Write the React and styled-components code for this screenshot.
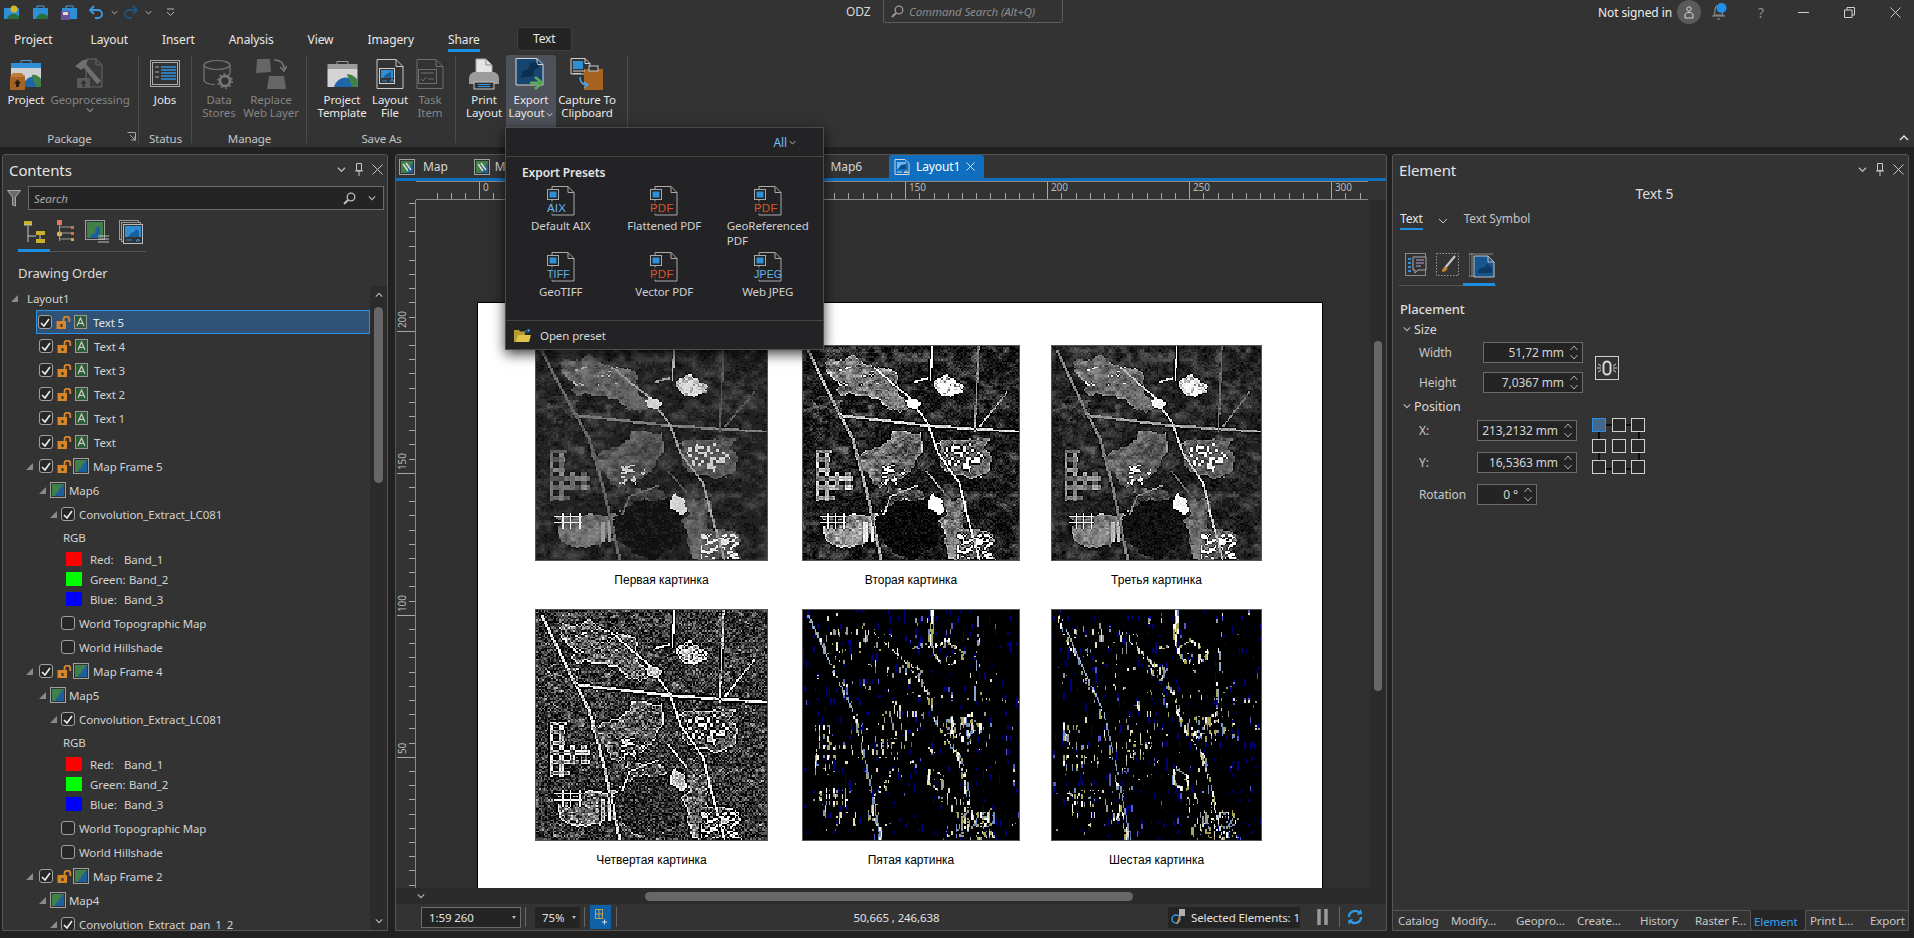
import React, { useMemo } from "react";
import styled, { createGlobalStyle } from "styled-components";

const FONT = `"Noto Sans", "Open Sans", "Liberation Sans", sans-serif`;

const Global = createGlobalStyle`
  html, body { margin: 0; padding: 0; background: #212121; overflow: hidden; }
  * { box-sizing: border-box; }
  body { font-family: ${FONT}; font-size: 12px; color: #dcdcdc; letter-spacing: -0.1px; }
`;

/* ---------- procedural satellite picture ---------- */
function hash(a, b) {
  const s = Math.sin(a * 127.1 + b * 311.7) * 43758.5453;
  return s - Math.floor(s);
}
function vnoise(x, y) {
  const xi = Math.floor(x), yi = Math.floor(y), fx = x - xi, fy = y - yi;
  const u = fx * fx * (3 - 2 * fx), v = fy * fy * (3 - 2 * fy);
  const a = hash(xi, yi), b = hash(xi + 1, yi), c = hash(xi, yi + 1), d = hash(xi + 1, yi + 1);
  return a + (b - a) * u + (c - a) * v + (a - b - c + d) * u * v;
}
function inPoly(px, py, pts) {
  let r = false;
  for (let i = 0, j = pts.length - 1; i < pts.length; j = i++) {
    const [xi, yi] = pts[i], [xj, yj] = pts[j];
    if (yi > py !== yj > py && px < ((xj - xi) * (py - yi)) / (yj - yi) + xi) r = !r;
  }
  return r;
}
function distLine(px, py, pts) {
  let best = 1e9;
  for (let i = 0; i < pts.length - 1; i++) {
    const [ax, ay] = pts[i], [bx, by] = pts[i + 1];
    const dx = bx - ax, dy = by - ay;
    const t = Math.max(0, Math.min(1, ((px - ax) * dx + (py - ay) * dy) / (dx * dx + dy * dy)));
    best = Math.min(best, Math.hypot(px - ax - t * dx, py - ay - t * dy));
  }
  return best;
}
const PATCHES = [
  { p: [[55, 40], [130, 35], [195, 75], [205, 125], [235, 165], [215, 190], [160, 160], [80, 130], [60, 90]], l: 0.4 },
  { p: [[110, 305], [165, 275], [185, 235], [240, 240], [250, 300], [215, 365], [165, 395], [130, 350]], l: 0.36 },
  { p: [[37, 470], [110, 475], [165, 455], [150, 520], [130, 560], [80, 565], [50, 525]], l: 0.46 },
  { p: [[292, 425], [340, 440], [345, 510], [400, 530], [400, 598], [300, 598]], l: 0.38 },
  { p: [[30, 130], [75, 150], [80, 210], [45, 215]], l: 0.2 },
  { p: [[180, 400], [240, 390], [250, 425], [190, 435]], l: 0.3 },
];
const ROADS = [
  { p: [[12, 15], [65, 160], [105, 260], [135, 410], [165, 598]], l: 0.4, w: 3 },
  { p: [[85, 195], [260, 222], [455, 240]], l: 0.5, w: 3.5 },
  { p: [[150, 60], [220, 140], [262, 215], [285, 300], [330, 385], [345, 470], [372, 598]], l: 0.62, w: 2.2 },
  { p: [[272, 0], [268, 95]], l: 0.7, w: 2 },
  { p: [[370, 0], [362, 240]], l: 0.34, w: 2 },
  { p: [[430, 130], [372, 225]], l: 0.38, w: 2 },
  { p: [[260, 350], [310, 430]], l: 0.32, w: 2 },
  { p: [[235, 100], [262, 90]], l: 0.6, w: 2.5 },
  { p: [[170, 470], [185, 420], [240, 390]], l: 0.42, w: 2 },
];
function lum(u, v) {
  const wu = u + 24 * (vnoise(u / 26, v / 26) - 0.5) + 9 * (vnoise(u / 8, v / 8 + 7) - 0.5);
  const wv = v + 24 * (vnoise(u / 26 + 9, v / 26) - 0.5) + 9 * (vnoise(u / 8 + 5, v / 8) - 0.5);
  let g = 0.07 + 0.17 * vnoise(u / 28, v / 28) * vnoise(u / 13 + 3, v / 13) * 1.6 + 0.06 * vnoise(u / 6, v / 6);
  if (Math.hypot(wu - 222, (wv - 505) * 0.8) < 68) g = 0.06 + 0.06 * vnoise(u / 9, v / 9);
  for (const s of PATCHES)
    if (inPoly(wu, wv, s.p)) g = s.l + 0.22 * (vnoise(u / 12, v / 12) - 0.5) + 0.1 * (vnoise(u / 5, v / 5) - 0.5);
  const circ = Math.hypot(wu - 337, wv - 310);
  if (circ < 60) g = 0.36 + 0.16 * (vnoise(u / 8, v / 8) - 0.5);
  if (circ < 42 && hash(Math.floor(u / 6), Math.floor(v / 8)) > 0.72) g = 0.82;
  if (u > 27 && u < 107 && v > 290 && v < 435 && (u < 62 + 6 * Math.sin(v / 30) || (v > 352 && v < 402))) {
    const f = Math.floor(u / 11) % 2 === 0 || Math.floor(v / 13) % 2 === 0;
    g = f ? 0.3 + 0.28 * hash(Math.floor(u / 11), Math.floor(v / 13)) : 0.13;
  }
  if (u > 37 && u < 92 && v > 468 && v < 512) {
    if (Math.floor(u / 17) !== Math.floor((u - 3) / 17) || Math.floor(v / 17) !== Math.floor((v - 4) / 17)) g = 0.92;
  }
  if (u > 120 && u < 150 && v > 490 && v < 550 && Math.floor(u / 8) % 2 === 0) g = 0.62;
  if (u > 325 && u < 400 && v > 525 && v < 592 && hash(Math.floor(wu / 8), Math.floor(wv / 7)) > 0.7) g = 0.92;
  if (u > 165 && u < 215 && v > 330 && v < 395 && hash(Math.floor(wu / 7), Math.floor(wv / 7)) > 0.82) g = 0.8;
  if (u > 70 && u < 160 && v > 50 && v < 110 && hash(Math.floor(wu / 7), Math.floor(wv / 7)) > 0.86) g = 0.7;
  for (const r of ROADS) if (distLine(u, v, r.p) < r.w) g = r.l + 0.1 * (vnoise(u / 7, v / 7) - 0.5);
  if (Math.hypot((wu - 307) * 0.8, wv - 113) < 23) g = 0.9 - 0.3 * hash(Math.floor(u / 6), Math.floor(v / 6)) * (vnoise(u / 9, v / 9) > 0.6 ? 1 : 0);
  if (Math.hypot(wu - 232, wv - 160) < 12) g = 0.86;
  if (Math.hypot((wu - 277) * 1.6, (wv - 440) * 0.9) < 27) g = 0.86;
  return g + 0.05 * (hash(u, v) - 0.5);
}
const COLS = 150, ROWS = 146;
const LGRID = (() => {
  const out = new Float32Array(COLS * ROWS);
  for (let r = 0; r < ROWS; r++)
    for (let c = 0; c < COLS; c++) out[r * COLS + c] = lum(((c + 0.5) / COLS) * 455, ((r + 0.5) / ROWS) * 598);
  return out;
})();
const at = (c, r) => LGRID[Math.max(0, Math.min(ROWS - 1, r)) * COLS + Math.max(0, Math.min(COLS - 1, c))];
const clamp = (x) => Math.max(0, Math.min(1, x));
const gray = (g) => {
  const q = Math.round(clamp(g) * 15) * 17;
  const h = q.toString(16).padStart(2, "0");
  return `#${h}${h}${h}`;
};
function colorAt(kind, c, r) {
  const L = at(c, r);
  const e = L - (at(c - 1, r) + at(c + 1, r) + at(c, r - 1) + at(c, r + 1)) / 4;
  if (kind === 1) return gray(L * 0.95 + e * 0.3);
  if (kind === 2) return gray((L - 0.08) * 1.5 + e * 3);
  if (kind === 3) return gray((L - 0.03) * 1.15 + e * 1.2);
  if (kind === 4) {
    const n = hash(c * 3.1, r * 1.7);
    return gray(0.08 + L * 0.75 + e * 9 + (n - 0.5) * 0.38);
  }
  const seed = kind === 5 ? 1 : 9;
  const u = ((c + 0.5) / COLS) * 455, v = ((r + 0.5) / ROWS) * 598;
  const nv = kind === 5 ? 0 : -6;
  if (distLine(u + nv, v, ROADS[0].p) < 1.4 && vnoise(c, r / 9 + seed) > 0.2) return v < 300 ? "#9db6d6" : "#7f95b4";
  if (distLine(u, v, ROADS[3].p) < 1) return "#ffffff";
  if (distLine(u, v, ROADS[4].p) < 0.9 && vnoise(c, r / 6 + seed) > 0.35) return "#8fa6c8";
  if (distLine(u, v, ROADS[2].p) < 0.9 && vnoise(c, r / 4 + seed) > 0.45) return "#d8d8d8";
  const d = Math.abs(at(c + 1, r) - at(c - 1, r)) + Math.abs(at(c + 1, r + 1) - at(c - 1, r + 1)) * 0.5;
  const streak = vnoise(c * 1.9 + seed, r / 5 + seed);
  const pick = hash(c + seed, Math.floor(r / 4));
  const edgeHit = d * streak > 0.24;
  const texHit = L > 0.25 && pick > 0.86 && streak > 0.55;
  if (edgeHit || texHit) {
    if (pick < 0.25) return "#ffffff";
    if (pick < 0.55) return "#a8a858";
    if (pick < 0.8) return "#6f8fc4";
    return pick > 0.93 ? "#e0e0c0" : "#9a9a9a";
  }
  if (streak > 0.76 && pick > 0.62) return pick > 0.95 ? "#5858c0" : "#000078";
  return "#000000";
}
function buildPaths(kind) {
  const map = {};
  for (let r = 0; r < ROWS; r++) {
    let start = 0;
    let cur = colorAt(kind, 0, r);
    for (let c = 1; c <= COLS; c++) {
      const col = c < COLS ? colorAt(kind, c, r) : null;
      if (col !== cur) {
        map[cur] = (map[cur] || "") + `M${start} ${r}h${c - start}v1h-${c - start}z`;
        start = c;
        cur = col;
      }
    }
  }
  return map;
}
const Raster = ({ kind }) => {
  const paths = useMemo(() => buildPaths(kind), [kind]);
  return (
    <RasterSvg viewBox={`0 0 ${COLS} ${ROWS}`} preserveAspectRatio="none" shapeRendering="crispEdges">
      {Object.entries(paths).map(([c, d]) => (
        <path key={c} d={d} fill={c} />
      ))}
    </RasterSvg>
  );
};

/* ---------- layout ---------- */
const Window = styled.div`
  position: relative;
  width: 1914px;
  height: 938px;
  overflow: hidden;
  display: flex;
  flex-direction: column;
  background: #212121;
`;
const TitleBar = styled.div`
  height: 24px;
  background: #333;
  display: grid;
  grid-template-columns: 846px 217px 1fr;
  align-items: start;
`;
const Qat = styled.div`
  display: flex;
  align-items: center;
  height: 24px;
  padding-left: 3px;
`;
const QatSlot = styled.span`
  display: inline-flex;
  margin-left: ${(p) => p.$ml || 0}px;
`;
const TitleMid = styled.div`
  display: flex;
  align-items: flex-start;
`;
const ProjectName = styled.span`
  width: 37px;
  line-height: 24px;
  color: #d8d8d8;
  font-size: 12px;
`;
const CommandSearch = styled.div`
  width: 180px;
  height: 23px;
  border: 1px solid #5c5c5c;
  border-top: none;
  border-radius: 0 0 3px 3px;
  display: flex;
  align-items: center;
  gap: 5px;
  padding-left: 7px;
  color: #8d8d8d;
  font-style: italic;
  font-size: 11.5px;
`;
const TitleRight = styled.div`
  display: flex;
  align-items: center;
  height: 24px;
  padding-left: 535px;
  position: relative;
`;
const SignedIn = styled.span`
  color: #eee;
  font-size: 12px;
  width: 79px;
  white-space: nowrap;
`;
const Avatar = styled.span`
  width: 24px;
  height: 24px;
  border-radius: 50%;
  background: #5a5a5a;
  display: inline-flex;
  align-items: center;
  justify-content: center;
`;
const WinSlot = styled.span`
  display: inline-flex;
  margin-left: ${(p) => p.$ml}px;
  color: #8a8a8a;
  font-size: 14px;
`;
const TabRow = styled.div`
  height: 28px;
  background: #333;
  display: flex;
  align-items: flex-end;
  gap: 34px;
  padding-left: 14px;
`;
const RibbonTab = styled.div`
  height: ${(p) => (p.$ctx ? 24 : 28)}px;
  padding-top: ${(p) => (p.$ctx ? 0 : 5)}px;
  margin-right: ${(p) => p.$mr || 0}px;
  line-height: 22px;
  font-size: 12px;
  color: #e8e8e8;
  border-bottom: ${(p) => (p.$active ? "3px solid #1e8fe0" : "none")};
  ${(p) =>
    p.$ctx &&
    `width:55px;text-align:center;background:#242424;border:1px solid #3e3e3e;border-radius:3px;margin-left:3px;margin-bottom:1px;`}
`;
const Ribbon = styled.div`
  height: 95px;
  background: #333;
  display: flex;
  position: relative;
`;
const Group = styled.div`
  width: ${(p) => p.$w}px;
  position: relative;
  display: flex;
  flex-direction: column;
  &::after {
    content: "";
    position: absolute;
    right: 0;
    top: 4px;
    bottom: 4px;
    width: 1px;
    background: #4c4c4c;
  }
`;
const GroupBody = styled.div`
  display: flex;
  height: 75px;
  padding-left: ${(p) => p.$pl || 0}px;
`;
const GroupLabel = styled.div`
  text-align: center;
  font-size: 11.5px;
  color: #c4c4c4;
  line-height: 14px;
  margin-top: 5px;
  padding-right: ${(p) => p.$pr || 0}px;
`;
const Launcher = styled.span`
  position: absolute;
  right: 3px;
  bottom: 6px;
  display: inline-flex;
`;
const RibbonBtn = styled.div`
  width: ${(p) => p.$w}px;
  height: 72px;
  margin-top: 3px;
  padding-top: 3px;
  display: flex;
  flex-direction: column;
  align-items: center;
  border-radius: 3px 3px 0 0;
  background: ${(p) => (p.$on ? "#4d5159" : "transparent")};
  color: ${(p) => (p.$off ? "#858585" : "#e8e8e8")};
`;
const BtnIcon = styled.div`
  height: 32px;
  display: flex;
  align-items: center;
  justify-content: center;
`;
const BtnLabel = styled.div`
  margin-top: 3px;
  font-size: 11.5px;
  line-height: 13px;
  text-align: center;
  white-space: pre;
`;
const LabelCaret = styled.span`
  display: inline-block;
  margin-left: 2px;
  vertical-align: -1px;
`;
const Collapse = styled.span`
  position: absolute;
  right: 5px;
  bottom: 4px;
  display: inline-flex;
`;
const Workspace = styled.div`
  margin-top: 7px;
  height: 777px;
  display: flex;
  padding-left: 2px;
`;
const Panel = styled.section`
  width: ${(p) => p.$w}px;
  margin-left: ${(p) => p.$ml || 0}px;
  background: #333;
  border: 1px solid #565656;
  border-radius: 3px 3px 0 0;
  display: flex;
  flex-direction: column;
  overflow: hidden;
  position: relative;
`;
const PanelHead = styled.div`
  height: 31px;
  flex: none;
  display: flex;
  align-items: center;
  justify-content: space-between;
  padding: 0 4px 2px 6px;
  font-size: 15px;
  color: #e4e4e4;
`;
const HeadTools = styled.div`
  display: flex;
  align-items: center;
  gap: 8px;
`;
const SearchRow = styled.div`
  height: 24px;
  flex: none;
  display: flex;
  align-items: center;
  padding: 0 3px 0 4px;
  gap: 7px;
`;
const SearchBox = styled.div`
  flex: 1;
  height: 24px;
  background: #242424;
  border: 1px solid #6b6b6b;
  display: flex;
  align-items: center;
  justify-content: space-between;
  padding: 0 7px 0 5px;
  color: #a8a8a8;
  font-style: italic;
  font-size: 11.5px;
`;
const SearchTools = styled.span`
  display: flex;
  align-items: center;
  gap: 12px;
`;
const IconTabs = styled.div`
  margin: ${(p) => p.$mt}px 0 0 ${(p) => p.$ml}px;
  width: ${(p) => p.$w}px;
  height: ${(p) => p.$h}px;
  flex: none;
  display: flex;
  align-items: flex-start;
  gap: ${(p) => p.$gap}px;
  padding-left: ${(p) => p.$pl}px;
  position: relative;
  border-bottom: 1px solid #555;
`;
const IconTabMark = styled.span`
  position: absolute;
  left: ${(p) => p.$l}px;
  bottom: -1px;
  width: ${(p) => p.$w}px;
  height: 3px;
  background: #1e8fe0;
`;
const DrawHead = styled.div`
  height: 34px;
  flex: none;
  padding: 9px 0 0 15px;
  font-size: 13px;
  line-height: 24px;
  color: #dcdcdc;
`;
const TreeWrap = styled.div`
  flex: 1;
  min-height: 0;
  display: flex;
`;
const Tree = styled.div`
  flex: 1;
  overflow: hidden;
`;
const Row = styled.div`
  height: ${(p) => p.$h || 24}px;
  margin-bottom: ${(p) => p.$mb || 0}px;
  position: relative;
  display: flex;
  align-items: center;
  padding-left: ${(p) => p.$x - 3}px;
  font-size: 11.5px;
  color: #d2d2d2;
  white-space: pre;
`;
const SelectBox = styled.div`
  height: 24px;
  margin-left: 33px;
  width: 334px;
  display: flex;
  align-items: center;
  padding-left: 1px;
  font-size: 11.5px;
  background: #2f5276;
  border: 1px solid #2c8fe6;
  color: #e4e4e4;
`;
const Slot = styled.span`
  display: inline-flex;
  flex: none;
  width: ${(p) => p.$w}px;
  margin-left: ${(p) => p.$ml || 0}px;
`;
const Swatch = styled.span`
  width: 16px;
  height: 14px;
  flex: none;
  background: ${(p) => p.$c};
  margin-right: 8px;
`;
const BandName = styled.span`
  display: inline-block;
  width: ${(p) => p.$w}px;
`;
const CheckBox = styled.span`
  width: 14px;
  height: 14px;
  flex: none;
  border: 1px solid #a0a0a0;
  border-radius: 3px;
  background: #272727;
  display: inline-flex;
  align-items: center;
  justify-content: center;
`;
const VTrack = styled.div`
  width: ${(p) => p.$w}px;
  flex: none;
  background: #2b2b2b;
  position: relative;
`;
const VThumb = styled.div`
  position: absolute;
  left: ${(p) => p.$l}px;
  width: ${(p) => p.$w}px;
  top: ${(p) => p.$t}px;
  height: ${(p) => p.$h}px;
  background: #676767;
  border-radius: 5px;
`;
const TrackArrow = styled.span`
  position: absolute;
  left: 0;
  right: 0;
  display: flex;
  justify-content: center;
  ${(p) => (p.$down ? "bottom: 5px;" : "top: 5px;")}
`;

/* center */
const DocTabs = styled.div`
  height: 23px;
  flex: none;
  display: flex;
  align-items: center;
  padding-left: 3px;
  border-bottom: 3px solid #0f6ebd;
  box-sizing: content-box;
`;
const DocTab = styled.div`
  display: flex;
  align-items: center;
  gap: 4px;
  height: 23px;
  font-size: 12px;
  color: #d6d6d6;
  margin-left: ${(p) => p.$ml || 0}px;
  ${(p) => p.$on && `background:#0f6ebd;color:#fff;border-radius:3px 3px 0 0;padding:0 6px 0 5px;width:95px;gap:6px;`}
`;
const RulerTop = styled.div`
  height: 19px;
  flex: none;
  display: flex;
`;
const RulerCorner = styled.div`
  width: 20px;
`;
const CanvasRow = styled.div`
  flex: 1;
  min-height: 0;
  display: flex;
`;
const RulerLeft = styled.div`
  width: 20px;
  flex: none;
`;
const Canvas = styled.div`
  flex: 1;
  overflow: hidden;
  padding: 102px 0 0 61px;
  background: #2f2f2f;
`;
const SheetPage = styled.div`
  width: 846px;
  height: 600px;
  background: #fff;
  border: 1px solid #000;
  padding: 42px 0 0 57px;
  display: grid;
  grid-template-columns: 267px 249px 211px;
  grid-template-rows: 264px 260px;
  font-family: "Liberation Sans", Arial, sans-serif;
  letter-spacing: 0;
`;
const Figure = styled.figure`
  margin: 0;
  width: ${(p) => p.$w}px;
  display: flex;
  flex-direction: column;
`;
const Picture = styled.div`
  height: ${(p) => p.$h}px;
  border: 1px solid #555;
  overflow: hidden;
`;
const RasterSvg = styled.svg`
  display: block;
  width: 100%;
  height: 100%;
`;
const Caption = styled.figcaption`
  margin-top: 12px;
  padding-left: ${(p) => p.$pl || 0}px;
  font-size: 12px;
  line-height: 14px;
  color: #000;
  text-align: center;
  white-space: nowrap;
`;
const HScrollBar = styled.div`
  height: 16px;
  flex: none;
  background: #2b2b2b;
  display: flex;
  align-items: center;
  justify-content: space-between;
  padding: 0 5px 0 21px;
  position: relative;
`;
const HThumb = styled.div`
  position: absolute;
  left: 249px;
  width: 488px;
  top: 4px;
  height: 9px;
  background: #676767;
  border-radius: 5px;
`;
const StatusBar = styled.div`
  height: 26px;
  flex: none;
  display: grid;
  grid-template-columns: auto 1fr auto;
  align-items: center;
  font-size: 11.5px;
  color: #e2e2e2;
  padding-left: 25px;
`;
const StatusLeft = styled.div`
  display: flex;
  align-items: center;
`;
const Combo = styled.div`
  width: ${(p) => p.$w}px;
  height: 21px;
  background: #242424;
  border: ${(p) => (p.$plain ? "none" : "1px solid #6b6b6b")};
  margin-left: ${(p) => p.$ml || 0}px;
  display: flex;
  align-items: center;
  justify-content: space-between;
  padding: 0 4px 0 7px;
`;
const MiniCaret = styled.span`
  width: 0;
  height: 0;
  border-left: 2.5px solid transparent;
  border-right: 2.5px solid transparent;
  border-top: 3px solid #bbb;
`;
const VRule = styled.span`
  width: 1px;
  height: 20px;
  background: #666;
  margin-left: ${(p) => p.$ml}px;
`;
const SnapBtn = styled.span`
  width: 21px;
  height: 24px;
  background: #0f62a8;
  margin-left: 5px;
  display: inline-flex;
  align-items: center;
  justify-content: center;
`;
const Coords = styled.div`
  text-align: center;
  padding-left: 8px;
`;
const StatusRight = styled.div`
  display: flex;
  align-items: center;
  padding-right: 23px;
`;
const SelectedBox = styled.div`
  width: 132px;
  height: 21px;
  background: #242424;
  display: flex;
  align-items: center;
  gap: 4px;
  padding-left: 3px;
  white-space: nowrap;
`;

/* right panel */
const TitleCenter = styled.div`
  height: 19px;
  line-height: 15px;
  flex: none;
  text-align: center;
  font-size: 14px;
  color: #dcdcdc;
  padding-left: 8px;
`;
const SubTabs = styled.div`
  height: 24px;
  flex: none;
  margin-top: 5px;
  display: flex;
  align-items: flex-start;
  padding-left: 7px;
  color: #c8c8c8;
  font-size: 12px;
`;
const SubTab = styled.span`
  height: 20px;
  line-height: 18px;
  margin-left: ${(p) => p.$ml || 0}px;
  color: ${(p) => (p.$on ? "#e6e6e6" : "#c4c4c4")};
  border-bottom: ${(p) => (p.$on ? "2px solid #1e8fe0" : "none")};
`;
const Placement = styled.div`
  padding: 15px 0 0 7px;
  font-size: 13px;
  line-height: 16px;
  color: #dcdcdc;
  font-weight: 500;
`;
const Section = styled.div`
  display: flex;
  align-items: center;
  gap: 3px;
  height: 16px;
  padding-bottom: 2px;
  margin: ${(p) => p.$mt}px 0 0 10px;
  font-size: 12.5px;
  color: #dcdcdc;
`;
const Block = styled.div`
  display: flex;
  align-items: ${(p) => (p.$center ? "center" : "flex-start")};
  margin-top: ${(p) => p.$mt}px;
`;
const Rows = styled.div`
  display: flex;
  flex-direction: column;
  gap: ${(p) => p.$gap}px;
`;
const PropRow = styled.div`
  display: flex;
  align-items: center;
  height: 21px;
  padding-left: 26px;
  font-size: 12px;
  color: #c8c8c8;
`;
const PropLabel = styled.span`
  width: ${(p) => p.$w}px;
`;
const Spin = styled.div`
  width: ${(p) => p.$w}px;
  height: 21px;
  background: #242424;
  border: 1px solid #6b6b6b;
  display: flex;
  align-items: center;
  justify-content: flex-end;
  color: #d4d4d4;
  gap: 5px;
  padding-right: 3px;
  font-size: 12px;
`;
const LinkBtn = styled.span`
  width: 24px;
  height: 24px;
  margin-left: 12px;
  border: 1px solid #d0d0d0;
  display: inline-flex;
  align-items: center;
  justify-content: center;
`;
const AnchorSlot = styled.span`
  display: inline-flex;
  margin: -2px 0 0 15px;
`;
const Spacer = styled.div`
  flex: 1;
`;
const BottomTabs = styled.div`
  height: 20px;
  flex: none;
  display: flex;
  padding-left: 1px;
  border-top: 1px solid #565656;
  font-size: 11.5px;
  color: #c8c8c8;
`;
const BottomTab = styled.div`
  width: ${(p) => p.$w}px;
  flex: none;
  height: 20px;
  line-height: 20px;
  white-space: nowrap;
  padding-left: 4px;
  ${(p) =>
    p.$on &&
    `color:#2ea4f5;background:#262626;margin-top:-1px;height:21px;border:1px solid #565656;border-top:1px solid #262626;border-radius:0 0 4px 4px;padding-left:3px;line-height:21px;`}
`;

/* popup */
const Popup = styled.div`
  position: absolute;
  left: 505px;
  top: 127px;
  width: 319px;
  height: 223px;
  background: #232326;
  border: 1px solid #4d4d4d;
  box-shadow: 0 4px 12px rgba(0, 0, 0, 0.75);
  display: flex;
  flex-direction: column;
  z-index: 5;
`;
const PopTop = styled.div`
  height: 29px;
  flex: none;
  border-bottom: 1px solid #444;
  display: flex;
  align-items: center;
  justify-content: flex-end;
  gap: 2px;
  padding-right: 27px;
  color: #7cbcf0;
  font-size: 12px;
`;
const PopTitle = styled.div`
  padding: 7px 0 0 16px;
  font-size: 12px;
  line-height: 17px;
  font-weight: 600;
  color: #e4e4e4;
`;
const PresetGrid = styled.div`
  display: grid;
  grid-template-columns: repeat(3, 103.5px);
  grid-auto-rows: 66px;
  padding-left: 3px;
  margin-top: 5px;
`;
const Preset = styled.div`
  display: flex;
  flex-direction: column;
  align-items: center;
  font-size: 11.5px;
  line-height: 15px;
  color: #cfcfcf;
  white-space: nowrap;
`;
const PresetLabel = styled.div`
  margin-top: 2px;
  text-align: ${(p) => (p.$left ? "left" : "center")};
  white-space: pre;
`;
const PopFoot = styled.div`
  margin-top: auto;
  height: 29px;
  border-top: 1px solid #444;
  display: flex;
  align-items: center;
  gap: 9px;
  padding-left: 8px;
  font-size: 11.5px;
  color: #d8d8d8;
`;

/* ---------- icons ---------- */
const Svg = ({ w, h, vb, children }) => (
  <svg width={w} height={h} viewBox={vb || `0 0 ${w} ${h}`} fill="none" style={{ display: "block" }}>
    {children}
  </svg>
);
const Chevron = ({ c = "#b5b5b5", s = 9, up }) => (
  <Svg w={s} h={s} vb="0 0 10 10">
    <path d={up ? "M1 7l4-4 4 4" : "M1 3l4 4 4-4"} stroke={c} strokeWidth="1.4" />
  </Svg>
);
const Tri = () => (
  <Svg w={7} h={7}>
    <path d="M7 0v7H0z" fill="#8a8a8a" />
  </Svg>
);
const Check = () => (
  <Svg w={10} h={9}>
    <path d="M1 5l3 3 5-7" stroke="#eee" strokeWidth="1.6" />
  </Svg>
);
const Lock = () => (
  <Svg w={15} h={13}>
    <path d="M7.5 5V3.4a2.9 2.9 0 0 1 5.8 0V6" stroke="#d8862a" strokeWidth="1.8" />
    <rect x="0.5" y="5" width="9.5" height="8" fill="#d8862a" />
    <rect x="4.5" y="8" width="2" height="3" fill="#333" />
  </Svg>
);
const TextGlyph = () => (
  <Svg w={13} h={14}>
    <rect x=".5" y=".5" width="12" height="13" fill="#2f5a36" stroke="#9a9a9a" />
    <path d="M3 11l3.5-8L10 11M4.2 8.4h4.6" stroke="#c8c8c8" strokeWidth="1.2" />
  </Svg>
);
const MapGlyph = ({ s = 16 }) => (
  <Svg w={s} h={s} vb="0 0 16 16">
    <rect x=".5" y=".5" width="15" height="15" stroke="#a0a0a0" />
    <rect x="2" y="2" width="12" height="12" fill="#3f8148" />
    <path d="M5 14l1-3 2-1 1-3 2-1 1-3 2 0v11z" fill="#1c5f9c" />
  </Svg>
);
const LinkedMapGlyph = () => (
  <Svg w={16} h={16}>
    <rect x=".5" y=".5" width="15" height="15" stroke="#a0a0a0" />
    <rect x="2" y="2" width="12" height="12" fill="#3f8148" />
    <path d="M8 14l1-4 5-6v10z" fill="#1c5f9c" />
    <path d="M4 5l5 7M7 4l5 7" stroke="#d6d6d6" strokeWidth="1.6" />
  </Svg>
);
const LayoutGlyph = () => (
  <Svg w={16} h={16}>
    <path d="M1 .5h10l4 4v11H1z" stroke="#d6d6d6" />
    <rect x="3" y="3" width="9" height="7" fill="#6fb6ee" />
    <path d="M4 10l3-4 5-1v5z" fill="#0d4f8a" />
    <path d="M3 13h5M10 13.500l2-2 2 2z" stroke="#d6d6d6" />
  </Svg>
);
const ProjectIcon = () => (
  <Svg w={32} h={32}>
    <path d="M11 5V2.5h10V5" stroke="#4a9bd8" />
    <rect x="1" y="5" width="30" height="5" fill="#2f8fd6" />
    <rect x="1" y="10" width="30" height="19" fill="#d0d0d0" />
    <path d="M13 29c1-8 8-12 14-10 2 .6 4 2 4 3v7z" fill="#1f66a8" />
    <path d="M22 17c3-1 7 1 9 4v8h-5c-1-4-4-9-4-12z" fill="#3f8148" />
    <path d="M1 18h14" stroke="#2f8fd6" />
    <rect x="0" y="19" width="15" height="13" fill="#a56324" />
    <path d="M0 19l3-4h9l3 4z" fill="#c07a33" />
    <path d="M7.5 21.5l3.5 4h-2V29h-3v-3.500h-2z" fill="#2c1c0c" />
  </Svg>
);
const GeoIcon = () => (
  <Svg w={32} h={32}>
    <path d="M12 1h10l6 6v22H12z" stroke="#666" fill="#3a3a3a" />
    <path d="M22 1v6h6" stroke="#666" />
    <path d="M1 8l8-6h5l-2 4 15 17-4 3L10 10l-3 2z" fill="#6f6f6f" />
    <rect x="3" y="20" width="13" height="10" fill="#5a5a5a" />
    <path d="M9.500 22l3 3.500h-2V29h-2v-3.500h-2z" fill="#2e2e2e" />
  </Svg>
);
const JobsIcon = () => (
  <Svg w={30} h={28}>
    <rect x=".5" y=".5" width="29" height="26" stroke="#a9a9a9" />
    <rect x="2.500" y="2.500" width="25" height="22" stroke="#a9a9a9" />
    <path d="M5 7h4M5 12h4M5 17h4" stroke="#a9a9a9" />
    <path d="M11 7h15M11 10h15M11 13h15M11 16h15M11 19h15" stroke="#2e93e0" strokeWidth="1.4" />
  </Svg>
);
const StoreIcon = () => (
  <Svg w={32} h={30}>
    <ellipse cx="14" cy="6" rx="13" ry="4.500" stroke="#777" strokeWidth="1.2" />
    <path d="M1 6v15c0 2.500 5 4.500 11 4.500M27 6v9" stroke="#777" strokeWidth="1.2" />
    <circle cx="22" cy="22" r="5" stroke="#7a7a7a" strokeWidth="2.600" />
    <circle cx="22" cy="22" r="7.200" stroke="#7a7a7a" strokeWidth="1.400" strokeDasharray="2 2.600" />
  </Svg>
);
const ReplaceIcon = () => (
  <Svg w={32} h={32}>
    <path d="M2 1h13l1 13-15 1z" fill="#666" />
    <path d="M14 18h15l2 13H12z" fill="#666" />
    <path d="M19 2c6 0 10 3 10 9M25 9l4 4 3-5" stroke="#777" strokeWidth="1.600" />
  </Svg>
);
const TemplateIcon = () => (
  <Svg w={31} h={28}>
    <path d="M10 4V1.500h11V4" stroke="#999" />
    <rect x=".5" y="4" width="30" height="5" fill="#9b9b9b" />
    <rect x=".5" y="9" width="30" height="18" fill="#d4d4d4" />
    <path d="M7 27c2-7 9-11 15-9 4 1 7 3 8.500 5v4z" fill="#1f66a8" />
    <path d="M20 14c4 0 9 3 10.500 6v7H25c-1-4-4-9-5-13z" fill="#3f8148" />
  </Svg>
);
const DocBase = ({ stroke = "#c8c8c8", children, w = 28, h = 30 }) => (
  <Svg w={w} h={h}>
    <path d={`M1 .5h${w - 9}l7 7V${h - 0.5}H1z`} stroke={stroke} fill="#333" />
    <path d={`M${w - 8} .5v7h7`} stroke={stroke} />
    {children}
  </Svg>
);
const LayoutFileIcon = () => (
  <DocBase>
    <rect x="3.500" y="9.500" width="15" height="15" stroke="#cfcfcf" />
    <rect x="5" y="11" width="12" height="8" fill="#2f8fd6" />
    <path d="M7 19l3-4 3-1 2-3v8z" fill="#1a5e9e" />
    <path d="M6 22h5M14 22l2-2 2 2z" stroke="#2f8fd6" />
  </DocBase>
);
const TaskIcon = () => (
  <DocBase stroke="#6e6e6e">
    <rect x="2.500" y="10.500" width="18" height="14" stroke="#6e6e6e" />
    <path d="M5 14h13M5 20l2 2 3-4M12 20h6" stroke="#6e6e6e" />
  </DocBase>
);
const PrintIcon = () => (
  <Svg w={32} h={32}>
    <path d="M8 1h10l6 6v9H8z" fill="#e4e4e4" stroke="#aaa" />
    <path d="M18 1v6h6" stroke="#888" />
    <path d="M1 21c0-5 3-7 6-7h18c3 0 6 2 6 7v5H1z" fill="#9c9c9c" />
    <rect x="6" y="24" width="20" height="7" fill="#333" stroke="#c8c8c8" />
    <path d="M10 26.500h12M10 28.500h12" stroke="#2e93e0" />
  </Svg>
);
const ExportIcon = () => (
  <Svg w={32} h={32}>
    <path d="M1 .5h21l6 6V27H1z" fill="#16456f" stroke="#d6d6d6" />
    <path d="M22 .5v6h6" stroke="#d6d6d6" />
    <path d="M5 20l3-7 5-2 2-6 6-1 3 5-5 3-1 6-6 1z" fill="#0e3050" />
    <path d="M15 25h9M20 19l7 6-7 6" stroke="#5ea85a" strokeWidth="2.800" />
  </Svg>
);
const CaptureIcon = () => (
  <Svg w={34} h={32}>
    <path d="M1 .5h14l5 5V16H1z" fill="#333" stroke="#cfcfcf" />
    <rect x="3" y="3" width="10" height="8" fill="#2f8fd6" />
    <path d="M15 .5v5h5" stroke="#cfcfcf" />
    <rect x="14" y="11" width="19" height="21" fill="#a5631f" />
    <rect x="19" y="8" width="9" height="5" fill="#333" stroke="#c8c8c8" />
    <path d="M10 19c0 5 3 8 8 8M14 24l4 3-4 3" stroke="#4ea2e6" strokeWidth="1.500" />
    <path d="M3 13h12M3 15.500h8" stroke="#cfcfcf" />
  </Svg>
);
const PresetIcon = ({ text, color }) => (
  <Svg w={28} h={30}>
    <path d="M5 .5h16l6 6V29H5z" stroke="#aaa" fill="#232326" />
    <path d="M21 .5v6h6" stroke="#aaa" />
    <rect x=".5" y="3.500" width="11" height="10" fill="#232326" stroke="#aaa" />
    <rect x="2.500" y="5.500" width="7" height="6" fill="#2f8fd6" />
    <rect x="0" y="15" width="25" height="13" fill="#232326" opacity="0.75" />
    <text
      x="0"
      y="26"
      fontFamily="'Liberation Sans', sans-serif"
      fontSize={text.length > 3 ? "10.5" : "11.5"}
      fill={color}
      letterSpacing="0.2"
    >
      {text}
    </text>
  </Svg>
);
const Pin = () => (
  <Svg w={10} h={13}>
    <path d="M2.500.5h5v7h-5zM1 8h8M5 8v5" stroke="#c8c8c8" />
  </Svg>
);
const Close = ({ c = "#c8c8c8", s = 11 }) => (
  <Svg w={s} h={s} vb="0 0 11 11">
    <path d="M.5.5l10 10M10.500.5l-10 10" stroke={c} />
  </Svg>
);
const Magnifier = ({ c = "#bdbdbd" }) => (
  <Svg w={13} h={13}>
    <circle cx="8" cy="5" r="3.800" stroke={c} strokeWidth="1.300" />
    <path d="M5 8l-4 4" stroke={c} strokeWidth="2" />
  </Svg>
);
const Filter = () => (
  <Svg w={14} h={17}>
    <path d="M.5.500h13L8.500 7v9l-3-1V7z" stroke="#a8a8a8" fill="#6a6a6a" />
  </Svg>
);
const TabDrawing = () => (
  <Svg w={23} h={24}>
    <path d="M1 1h8v4H1z" fill="#c7b22c" />
    <path d="M1 5h8M5 6v16M5 16h8" stroke="#c8c8c8" />
    <path d="M13 11h9v4h-9zM13 19h9v4h-9z" fill="#c7b22c" />
    <path d="M17 15v4" stroke="#c8c8c8" />
  </Svg>
);
const TabSource = () => (
  <Svg w={19} h={24}>
    <rect x="1" y="0" width="5" height="5" fill="#e2765f" />
    <circle cx="3.500" cy="14" r="2.500" fill="#eac46a" />
    <path d="M3.500 5v16M3.500 7h12M3.500 13h12M3.500 19h12" stroke="#999" />
    <path d="M15 6h3v3h-3z" fill="#d9694f" />
    <path d="M15 12h3v3h-3z" fill="#d9694f" />
    <path d="M15 18h3v3h-3z" fill="#d2a23c" />
  </Svg>
);
const TabSnap = () => (
  <Svg w={24} h={23}>
    <rect x=".5" y=".5" width="19" height="19" stroke="#a0a0a0" />
    <rect x="2" y="2" width="16" height="16" fill="#3f8148" />
    <path d="M5 18l2-4 3-1 1-5 4-2v12z" fill="#1c5f9c" />
    <path d="M13 16h11M13 19h11M13 22h11" stroke="#c0c0c0" />
  </Svg>
);
const TabLabel = () => (
  <Svg w={24} h={24}>
    <rect x=".5" y=".5" width="19" height="19" stroke="#999" />
    <rect x="2.500" y="2.500" width="19" height="19" stroke="#999" fill="#333" />
    <rect x="4.500" y="4.500" width="19" height="19" stroke="#bbb" fill="#333" />
    <rect x="6" y="6" width="16" height="11" fill="#2f8fd6" />
    <path d="M9 17l3-4 3-1 2-3 3 2v6z" fill="#1a5e9e" />
    <path d="M7 20h6M17 21l2-2 2 2z" stroke="#2f8fd6" />
  </Svg>
);
const ElemA = () => (
  <Svg w={22} h={23}>
    <rect x=".5" y=".5" width="20" height="22" stroke="#8a8a8a" />
    <path d="M3 6h3M3 10h3M3 14h3M3 18h3" stroke="#2f8fd6" strokeWidth="2" />
    <path d="M8 4h13v13H13l-3 3v-3H8z" stroke="#aaa" fill="#333" />
    <path d="M11 7h8M11 10h8M11 13h5" stroke="#b9a1d4" />
  </Svg>
);
const ElemB = () => (
  <Svg w={24} h={24}>
    <rect x=".5" y=".5" width="22" height="22" stroke="#999" strokeDasharray="1.500 1.500" />
    <path d="M19 3L9 15" stroke="#c6c6c6" strokeWidth="2.200" />
    <path d="M10 14c-2-.5-4 1-4 5 2.500 0 5-1 5.500-3.500z" fill="#c7822e" />
  </Svg>
);
const ElemC = () => (
  <Svg w={26} h={25}>
    <path d="M0 0v24M3 0v24M0 1h24M0 23h26" stroke="#888" />
    <path d="M5 3h14l6 6v15H5z" fill="#16558f" stroke="#c0c0c0" />
    <path d="M19 3v6h6" stroke="#c0c0c0" />
    <path d="M8 20l3-5 5-1 2-3 5 4v5z" fill="#0e3a64" />
  </Svg>
);
const SpinArrows = () => (
  <Svg w={10} h={17}>
    <path d="M1.500 6l3.500-4 3.500 4M1.500 11l3.500 4 3.500-4" stroke="#b0b0b0" />
  </Svg>
);
const LinkGlyph = () => (
  <Svg w={20} h={18}>
    <rect x="6.500" y="2.500" width="7" height="13" rx="3.500" stroke="#d6d6d6" strokeWidth="2" />
    <path d="M1 5l3 2M1 13l3-2M19 5l-3 2M19 13l-3-2M0 9h4M16 9h4" stroke="#d6d6d6" />
  </Svg>
);
const AnchorGrid = () => (
  <Svg w={54} h={58}>
    <path d="M7 7h40M7 7v44M47 7v44M7 51h40" stroke="#000" strokeWidth="1.500" />
    {[0, 20, 39].flatMap((x) =>
      [0, 21, 42].map((y) => (
        <rect
          key={`${x}-${y}`}
          x={x + 0.5}
          y={y + 0.5}
          width="13"
          height="13"
          fill={x === 0 && y === 0 ? "#44688a" : "#2a2a2a"}
          stroke={x === 0 && y === 0 ? "#2c8fe6" : "#d0d0d0"}
        />
      ))
    )}
  </Svg>
);
const Folder = () => (
  <Svg w={17} h={13}>
    <path d="M0 1h5l1 1.500h5V13H0z" fill="#b79a30" />
    <path d="M2 13l2-7h13l-2 7z" fill="#e0c349" />
    <path d="M10 4c1-2 3-2.500 5-2.500M13.500 0L16 1.500 13.500 3.500" stroke="#3f9ae0" />
  </Svg>
);
const HTopRuler = () => (
  <svg width="952" height="19" style={{ display: "block" }}>
    <path d="M0 .5H952M0 18.500H952" stroke="#8a8a8a" />
    {Array.from({ length: 67 }, (_, i) => {
      const x = Math.round(20.5 + i * 14.2) + 0.5;
      const major = (i - 3) % 10 === 0;
      return <path key={i} d={`M${x} ${major ? 1 : 12}V18`} stroke="#a8a8a8" />;
    })}
    {[
      [0, 67],
      [50, 209],
      [100, 351],
      [150, 493],
      [200, 635],
      [250, 777],
      [300, 919],
    ].map(([t, x]) => (
      <text key={t} x={x} y="10" fontFamily="'Noto Sans', sans-serif" fontSize="10" fill="#b8b8b8">
        {t}
      </text>
    ))}
  </svg>
);
const VLeftRuler = () => (
  <svg width="20" height="690" style={{ display: "block" }}>
    <path d="M19.500 0V690" stroke="#8a8a8a" />
    {Array.from({ length: 49 }, (_, i) => {
      const y = Math.round(3 + i * 14.2) + 0.5;
      const major = (i - 9) % 10 === 0 && i >= 9;
      return <path key={i} d={`M${major ? 1 : 13} ${y}H19`} stroke="#a8a8a8" />;
    })}
    {[
      [200, 128],
      [150, 270],
      [100, 412],
      [50, 554],
    ].map(([t, y]) => (
      <text
        key={t}
        transform={`translate(10 ${y}) rotate(-90)`}
        fontFamily="'Noto Sans', sans-serif"
        fontSize="10"
        fill="#b8b8b8"
      >
        {t}
      </text>
    ))}
  </svg>
);

/* ---------- data ---------- */
const layerRows = (frame, map, lyr) => [
  { k: "frame", label: frame },
  { k: "map", label: map },
  { k: "layer", label: lyr },
  { k: "rgb", label: "RGB" },
  { k: "band", c: "#ff0000", a: "Red:", b: "Band_1" },
  { k: "band", c: "#00ff00", a: "Green:", b: "Band_2" },
  { k: "band", c: "#0000ff", a: "Blue:", b: "Band_3", mb: 2 },
  { k: "base", label: "World Topographic Map" },
  { k: "base", label: "World Hillshade" },
];
const TREE = [
  { k: "root", label: "Layout1" },
  { k: "text", label: "Text 5", sel: true },
  { k: "text", label: "Text 4" },
  { k: "text", label: "Text 3" },
  { k: "text", label: "Text 2" },
  { k: "text", label: "Text 1" },
  { k: "text", label: "Text" },
  ...layerRows("Map Frame 5", "Map6", "Convolution_Extract_LC081"),
  ...layerRows("Map Frame 4", "Map5", "Convolution_Extract_LC081"),
  { k: "frame", label: "Map Frame 2" },
  { k: "map", label: "Map4" },
  { k: "layer", label: "Convolution_Extract_pan_1_2" },
];

const TreeRow = ({ r }) => {
  if (r.k === "root")
    return (
      <Row $x={11}>
        <Slot $w={16}><Tri /></Slot>
        {r.label}
      </Row>
    );
  if (r.k === "text") {
    const inner = (
      <>
        <CheckBox><Check /></CheckBox>
        <Slot $w={15} $ml={4}><Lock /></Slot>
        <Slot $w={13} $ml={3}><TextGlyph /></Slot>
        <Slot $w={6} />
        {r.label}
      </>
    );
    return r.sel ? <SelectBox>{inner}</SelectBox> : <Row $x={39}>{inner}</Row>;
  }
  if (r.k === "frame")
    return (
      <Row $x={26}>
        <Slot $w={10}><Tri /></Slot>
        <Slot $w={3} />
        <CheckBox><Check /></CheckBox>
        <Slot $w={15} $ml={4}><Lock /></Slot>
        <Slot $w={16} $ml={1}><MapGlyph /></Slot>
        <Slot $w={4} />
        {r.label}
      </Row>
    );
  if (r.k === "map")
    return (
      <Row $x={39}>
        <Slot $w={11}><Tri /></Slot>
        <Slot $w={19}><MapGlyph /></Slot>
        {r.label}
      </Row>
    );
  if (r.k === "layer")
    return (
      <Row $x={50}>
        <Slot $w={11}><Tri /></Slot>
        <CheckBox><Check /></CheckBox>
        <Slot $w={4} />
        {r.label}
      </Row>
    );
  if (r.k === "rgb") return <Row $x={63} $h={23}>{r.label}</Row>;
  if (r.k === "band")
    return (
      <Row $x={66} $h={20} $mb={r.mb}>
        <Swatch $c={r.c} />
        <BandName $w={r.a === "Green:" ? 39 : 34}>{r.a}</BandName>
        {r.b}
      </Row>
    );
  return (
    <Row $x={61}>
      <CheckBox />
      <Slot $w={4} />
      {r.label}
    </Row>
  );
};

const PRESETS = [
  { t: "AIX", c: "#69b4ee", l: "Default AIX" },
  { t: "PDF", c: "#d9552c", l: "Flattened PDF" },
  { t: "PDF", c: "#d9552c", l: "GeoReferenced\nPDF", left: true },
  { t: "TIFF", c: "#69b4ee", l: "GeoTIFF" },
  { t: "PDF", c: "#d9552c", l: "Vector PDF" },
  { t: "JPEG", c: "#69b4ee", l: "Web JPEG" },
];
const FIGS = [
  [1, 233, 216, "Первая картинка", 20],
  [2, 218, 216, "Вторая картинка", 0],
  [3, 211, 216, "Третья картинка", 0],
  [4, 233, 232, "Четвертая картинка", 0],
  [5, 218, 232, "Пятая картинка", 0],
  [6, 211, 232, "Шестая картинка", 0],
];
const DOCK = [
  ["Catalog", 53],
  ["Modify...", 65],
  ["Geopro...", 61],
  ["Create...", 63],
  ["History", 55],
  ["Raster F...", 59],
  ["Element", 56, true],
  ["Print L...", 60],
  ["Export", 40],
];

export default function App() {
  return (
    <Window>
      <Global />
      <TitleBar>
        <Qat>
          <QatSlot>
            <Svg w={17} h={15}>
              <rect x="1" y="3" width="15" height="11" fill="#2f8fd6" />
              <path d="M4 14c1-4 5-6 8-5l4 2v3z" fill="#2a6d3d" />
              <circle cx="11" cy="4" r="3.500" fill="#d7b52c" />
            </Svg>
          </QatSlot>
          <QatSlot $ml={12}>
            <Svg w={17} h={15}>
              <path d="M5 3V1h7v2" stroke="#4a9bd8" />
              <rect x="1" y="3" width="15" height="11" fill="#2f8fd6" />
              <path d="M4 14c1-4 5-6 8-5l4 2v3z" fill="#2a6d3d" />
            </Svg>
          </QatSlot>
          <QatSlot $ml={12}>
            <Svg w={17} h={15}>
              <path d="M5 3V1h7v2" stroke="#4a9bd8" />
              <rect x="1" y="3" width="15" height="11" fill="#2f8fd6" />
              <rect x="0" y="6" width="9" height="9" fill="#6b4f9c" />
              <rect x="2" y="7" width="5" height="3" fill="#ddd" />
            </Svg>
          </QatSlot>
          <QatSlot $ml={11}>
            <Svg w={14} h={14}>
              <path d="M1 5h8a4 4 0 0 1 0 8H6M5 1L1 5l4 4" stroke="#3c9ce4" strokeWidth="1.800" />
            </Svg>
          </QatSlot>
          <QatSlot $ml={8}><Chevron s={7} /></QatSlot>
          <QatSlot $ml={6}>
            <Svg w={14} h={14}>
              <path d="M13 5H5a4 4 0 0 0 0 8h3M9 1l4 4-4 4" stroke="#1f527d" strokeWidth="1.800" />
            </Svg>
          </QatSlot>
          <QatSlot $ml={7}><Chevron s={7} /></QatSlot>
          <QatSlot $ml={14}>
            <Svg w={9} h={9}>
              <path d="M1 1h7M1 4l3.500 3.500L8 4" stroke="#b5b5b5" />
            </Svg>
          </QatSlot>
        </Qat>
        <TitleMid>
          <ProjectName>ODZ</ProjectName>
          <CommandSearch>
            <Magnifier c="#9a9a9a" />
            Command Search (Alt+Q)
          </CommandSearch>
        </TitleMid>
        <TitleRight>
          <SignedIn>Not signed in</SignedIn>
          <Avatar>
            <Svg w={10} h={13}>
              <circle cx="5" cy="3" r="2.200" stroke="#d6d6d6" />
              <path d="M1 12V9c0-2 2-2.500 4-2.500S9 7 9 9v3z" stroke="#d6d6d6" />
            </Svg>
          </Avatar>
          <WinSlot $ml={10}>
            <Svg w={16} h={18}>
              <path d="M3 12c1-2 1-4 1-6a3.500 3.500 0 0 1 7 0c0 2 0 4 1 6zM1 13h13M6 16h3" stroke="#9a9a9a" />
              <circle cx="10.500" cy="5" r="5" fill="#2090ee" />
            </Svg>
          </WinSlot>
          <WinSlot $ml={31}>?</WinSlot>
          <WinSlot $ml={34}>
            <Svg w={11} h={11}><path d="M0 5.500h11" stroke="#cfcfcf" /></Svg>
          </WinSlot>
          <WinSlot $ml={35}>
            <Svg w={11} h={11}><path d="M.5 3h7.500v7.500H.5zM3 3V.5h7.500V8H8" stroke="#cfcfcf" /></Svg>
          </WinSlot>
          <WinSlot $ml={35}><Close /></WinSlot>
        </TitleRight>
      </TitleBar>
      <TabRow>
        <RibbonTab $mr={4}>Project</RibbonTab>
        <RibbonTab>Layout</RibbonTab>
        <RibbonTab>Insert</RibbonTab>
        <RibbonTab>Analysis</RibbonTab>
        <RibbonTab>View</RibbonTab>
        <RibbonTab>Imagery</RibbonTab>
        <RibbonTab $active>Share</RibbonTab>
        <RibbonTab $ctx>Text</RibbonTab>
      </TabRow>
      <Ribbon>
        <Group $w={139}>
          <GroupBody $pl={4}>
            <RibbonBtn $w={44}><BtnIcon><ProjectIcon /></BtnIcon><BtnLabel>Project</BtnLabel></RibbonBtn>
            <RibbonBtn $w={84} $off>
              <BtnIcon><GeoIcon /></BtnIcon>
              <BtnLabel>Geoprocessing</BtnLabel>
              <Slot $w={9} $ml={0}><Chevron c="#8a8a8a" s={8} /></Slot>
            </RibbonBtn>
          </GroupBody>
          <GroupLabel>Package</GroupLabel>
          <Launcher>
            <Svg w={9} h={9}><path d="M.5.5h8v8M3 3l5 5M4 8h4V4" stroke="#a8a8a8" /></Svg>
          </Launcher>
        </Group>
        <Group $w={53}>
          <GroupBody>
            <RibbonBtn $w={52}><BtnIcon><JobsIcon /></BtnIcon><BtnLabel>Jobs</BtnLabel></RibbonBtn>
          </GroupBody>
          <GroupLabel>Status</GroupLabel>
        </Group>
        <Group $w={115}>
          <GroupBody $pl={2}>
            <RibbonBtn $w={50} $off><BtnIcon><StoreIcon /></BtnIcon><BtnLabel>{"Data\nStores"}</BtnLabel></RibbonBtn>
            <RibbonBtn $w={54} $off><BtnIcon><ReplaceIcon /></BtnIcon><BtnLabel>{"Replace\nWeb Layer"}</BtnLabel></RibbonBtn>
          </GroupBody>
          <GroupLabel>Manage</GroupLabel>
        </Group>
        <Group $w={149}>
          <GroupBody $pl={10}>
            <RibbonBtn $w={50}><BtnIcon><TemplateIcon /></BtnIcon><BtnLabel>{"Project\nTemplate"}</BtnLabel></RibbonBtn>
            <RibbonBtn $w={46}><BtnIcon><LayoutFileIcon /></BtnIcon><BtnLabel>{"Layout\nFile"}</BtnLabel></RibbonBtn>
            <RibbonBtn $w={34} $off><BtnIcon><TaskIcon /></BtnIcon><BtnLabel>{"Task\nItem"}</BtnLabel></RibbonBtn>
          </GroupBody>
          <GroupLabel>Save As</GroupLabel>
        </Group>
        <Group $w={172}>
          <GroupBody $pl={6}>
            <RibbonBtn $w={44}><BtnIcon><PrintIcon /></BtnIcon><BtnLabel>{"Print\nLayout"}</BtnLabel></RibbonBtn>
            <RibbonBtn $w={50} $on>
              <BtnIcon><ExportIcon /></BtnIcon>
              <BtnLabel>
                {"Export\nLayout"}
                <LabelCaret><Chevron c="#dcdcdc" s={7} /></LabelCaret>
              </BtnLabel>
            </RibbonBtn>
            <RibbonBtn $w={62}><BtnIcon><CaptureIcon /></BtnIcon><BtnLabel>{"Capture To\nClipboard"}</BtnLabel></RibbonBtn>
          </GroupBody>
        </Group>
        <Collapse><Chevron c="#e6e6e6" s={10} up /></Collapse>
      </Ribbon>
      <Workspace>
        <Panel $w={386}>
          <PanelHead>
            Contents
            <HeadTools>
              <Chevron />
              <Pin />
              <Close />
            </HeadTools>
          </PanelHead>
          <SearchRow>
            <Filter />
            <SearchBox>
              Search
              <SearchTools>
                <Magnifier />
                <Chevron s={8} />
              </SearchTools>
            </SearchBox>
          </SearchRow>
          <IconTabs $mt={10} $ml={15} $w={128} $h={32} $gap={10} $pl={5}>
            <TabDrawing />
            <TabSource />
            <TabSnap />
            <TabLabel />
            <IconTabMark $l={0} $w={32} />
          </IconTabs>
          <DrawHead>Drawing Order</DrawHead>
          <TreeWrap>
            <Tree>
              {TREE.map((r, i) => (
                <TreeRow key={i} r={r} />
              ))}
            </Tree>
            <VTrack $w={17}>
              <TrackArrow><Chevron up s={8} /></TrackArrow>
              <VThumb $l={4} $w={9} $t={21} $h={176} />
              <TrackArrow $down><Chevron s={8} /></TrackArrow>
            </VTrack>
          </TreeWrap>
        </Panel>
        <Panel $w={992} $ml={7}>
          <DocTabs>
            <LinkedMapGlyph />
            <DocTab $ml={8}>Map</DocTab>
            <DocTab $ml={26}><LinkedMapGlyph /></DocTab>
            <DocTab $ml={5}>M</DocTab>
            <DocTab $ml={325}>Map6</DocTab>
            <DocTab $on $ml={27}>
              <LayoutGlyph />
              Layout1
              <Close c="#fff" s={9} />
            </DocTab>
          </DocTabs>
          <RulerTop>
            <RulerCorner />
            <HTopRuler />
          </RulerTop>
          <CanvasRow>
            <RulerLeft><VLeftRuler /></RulerLeft>
            <Canvas>
              <SheetPage>
                {FIGS.map(([k, w, h, t, pl]) => (
                  <Figure key={k} $w={w}>
                    <Picture $h={h}><Raster kind={k} /></Picture>
                    <Caption $pl={pl}>{t}</Caption>
                  </Figure>
                ))}
              </SheetPage>
            </Canvas>
            <VTrack $w={15}>
              <VThumb $l={3} $w={8} $t={141} $h={350} />
            </VTrack>
          </CanvasRow>
          <HScrollBar>
            <Chevron s={8} />
            <HThumb />
          </HScrollBar>
          <StatusBar>
            <StatusLeft>
              <Combo $w={100}>1:59 260<MiniCaret /></Combo>
              <VRule $ml={4} />
              <Combo $w={45} $plain $ml={9}>75%<MiniCaret /></Combo>
              <VRule $ml={4} />
              <SnapBtn>
                <Svg w={13} h={18}>
                  <path d="M1.500 1.500h7v9h-7zM1.500 6h7M5 1.500v9" stroke="#c8a14d" />
                  <path d="M8 14h5M10.500 11.500v5" stroke="#cde" />
                </Svg>
              </SnapBtn>
              <VRule $ml={5} />
            </StatusLeft>
            <Coords>50,665 , 246,638</Coords>
            <StatusRight>
              <SelectedBox>
                <Svg w={16} h={18}>
                  <circle cx="5" cy="11" r="4" stroke="#3c9ce4" strokeWidth="1.400" />
                  <rect x="8" y="1" width="6" height="7" fill="#b0b0b0" />
                  <path d="M9 8l-3 8" stroke="#c9953a" strokeWidth="1.600" />
                </Svg>
                Selected Elements: 1
              </SelectedBox>
              <Slot $w={12} $ml={17}>
                <Svg w={12} h={18}><path d="M2 1v16M9 1v16" stroke="#9a9a9a" strokeWidth="3.500" /></Svg>
              </Slot>
              <VRule $ml={10} />
              <Slot $w={16} $ml={7}>
                <Svg w={16} h={18}>
                  <path d="M2 9a6 6 0 0 1 10-4.500M14 9a6 6 0 0 1-10 4.500" stroke="#2f9be8" strokeWidth="2.400" />
                  <path d="M10 7l5-1-1-5M6 11l-5 1 1 5" fill="#2f9be8" />
                </Svg>
              </Slot>
            </StatusRight>
          </StatusBar>
        </Panel>
        <Panel $w={517} $ml={5}>
          <PanelHead>
            Element
            <HeadTools>
              <Chevron />
              <Pin />
              <Close />
            </HeadTools>
          </PanelHead>
          <TitleCenter>Text 5</TitleCenter>
          <SubTabs>
            <SubTab $on>Text</SubTab>
            <Slot $w={10} $ml={15}><Svg w={10} h={18}><path d="M1 9l4 4 4-4" stroke="#c8c8c8" /></Svg></Slot>
            <SubTab $ml={16}>Text Symbol</SubTab>
          </SubTabs>
          <IconTabs $mt={19} $ml={6} $w={97} $h={33} $gap={9} $pl={6}>
            <ElemA />
            <ElemB />
            <ElemC />
            <IconTabMark $l={64} $w={32} />
          </IconTabs>
          <Placement>Placement</Placement>
          <Section $mt={5}><Chevron s={8} />Size</Section>
          <Block $center $mt={4}>
            <Rows $gap={9}>
              <PropRow><PropLabel $w={64}>Width</PropLabel><Spin $w={100}>51,72 mm<SpinArrows /></Spin></PropRow>
              <PropRow><PropLabel $w={64}>Height</PropLabel><Spin $w={100}>7,0367 mm<SpinArrows /></Spin></PropRow>
            </Rows>
            <LinkBtn><LinkGlyph /></LinkBtn>
          </Block>
          <Section $mt={6}><Chevron s={8} />Position</Section>
          <Block $mt={5}>
            <Rows $gap={11}>
              <PropRow><PropLabel $w={58}>X:</PropLabel><Spin $w={100}>213,2132 mm<SpinArrows /></Spin></PropRow>
              <PropRow><PropLabel $w={58}>Y:</PropLabel><Spin $w={100}>16,5363 mm<SpinArrows /></Spin></PropRow>
              <PropRow><PropLabel $w={58}>Rotation</PropLabel><Spin $w={60}>0 °<SpinArrows /></Spin></PropRow>
            </Rows>
            <AnchorSlot><AnchorGrid /></AnchorSlot>
          </Block>
          <Spacer />
          <BottomTabs>
            {DOCK.map(([t, w, on]) => (
              <BottomTab key={t} $w={w} $on={on}>{t}</BottomTab>
            ))}
          </BottomTabs>
        </Panel>
      </Workspace>
      <Popup>
        <PopTop>All<Chevron c="#bbb" s={7} /></PopTop>
        <PopTitle>Export Presets</PopTitle>
        <PresetGrid>
          {PRESETS.map((p, i) => (
            <Preset key={i}>
              <PresetIcon text={p.t} color={p.c} />
              <PresetLabel $left={p.left}>{p.l}</PresetLabel>
            </Preset>
          ))}
        </PresetGrid>
        <PopFoot><Folder />Open preset</PopFoot>
      </Popup>
    </Window>
  );
}
